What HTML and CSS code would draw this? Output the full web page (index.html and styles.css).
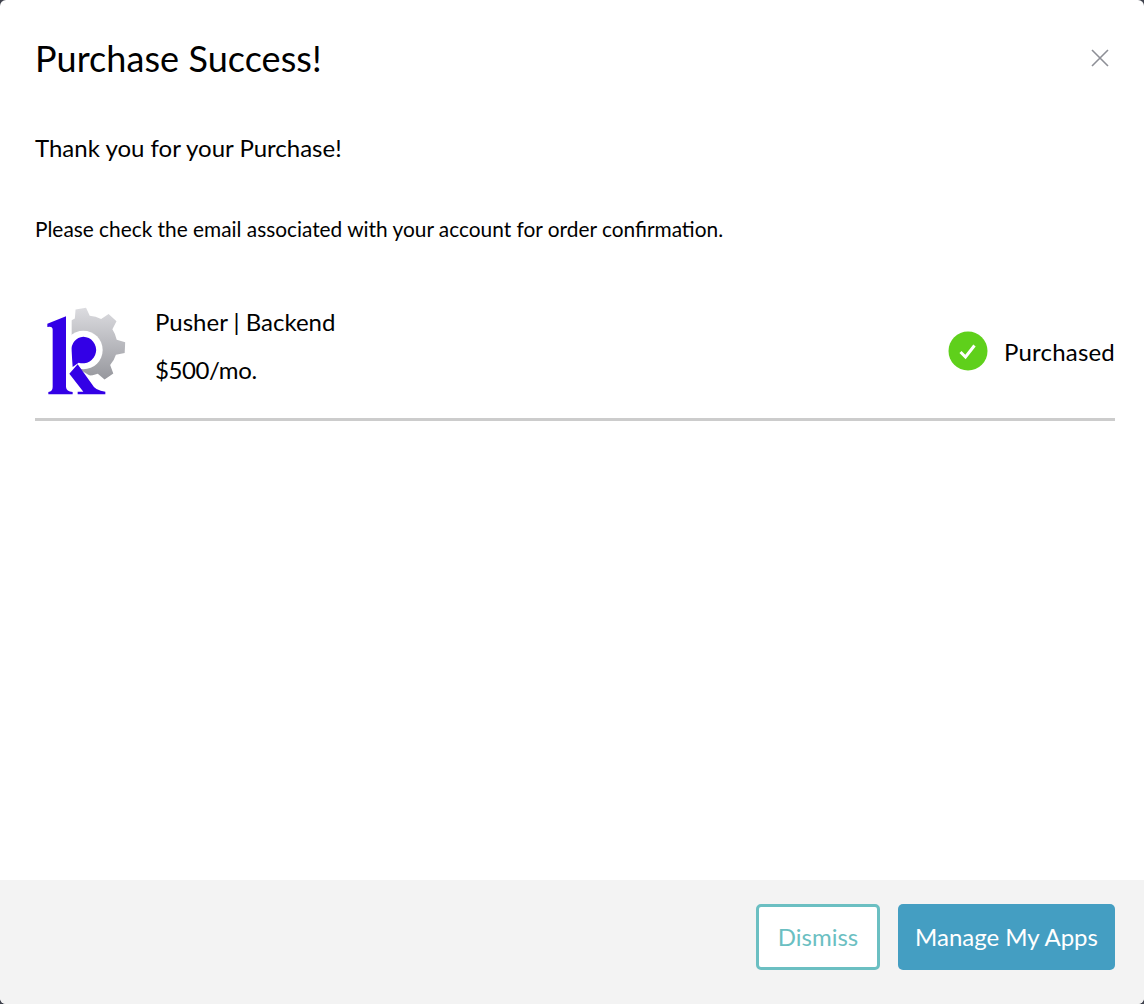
FILE: index.html
```html
<!DOCTYPE html>
<html lang="en">
<head>
  <meta charset="UTF-8" />
  <title>Purchase Success</title>
  <link rel="stylesheet" href="styles.css">
</head>
<body>
  <div class="modal">
    <div class="modal-body">
      <div class="modal-head">
        <h1>Purchase Success!</h1>
        <svg class="close-icon" viewBox="0 0 18 18" aria-label="Close">
          <path d="M1 1 L17 17 M17 1 L1 17" />
        </svg>
      </div>
      <p class="thanks">Thank you for your Purchase!</p>
      <p class="note">Please check the email associated with your account for order confirmation.</p>

      <div class="item">
        <svg class="logo" viewBox="30 36 270 270" aria-label="Logo">
          <defs>
            <linearGradient id="gearFill" gradientUnits="userSpaceOnUse" x1="0" y1="38" x2="0" y2="265">
              <stop offset="0" stop-color="#dcdce0" />
              <stop offset="1" stop-color="#93949a" />
            </linearGradient>
            <clipPath id="gearShape">
              <circle cx="172" cy="152" r="90" />
              <polygon points="148,70 196,70 188,39 156,39" transform="rotate(-10 172 152)" />
              <polygon points="148,70 196,70 188,39 156,39" transform="rotate(42 172 152)" />
              <polygon points="148,70 196,70 188,39 156,39" transform="rotate(93 172 152)" />
              <polygon points="148,70 196,70 188,39 156,39" transform="rotate(145 172 152)" />
            </clipPath>
          </defs>
          <rect x="30" y="36" width="270" height="240" fill="url(#gearFill)" clip-path="url(#gearShape)" />
          <rect x="60" y="36" width="65" height="270" fill="#fff" />
          <polygon points="110,200 190,248 210,306 60,306" fill="#fff" />
          <circle cx="160" cy="165" r="58" fill="#fff" />
          <path fill="#3300e6" d="M52 86 L108 64 L108 276 Q109 290 128 291 L128 298 L55 298 L55 291 Q68 290 68 276 L68 104 Q68 92 52 96 Z" />
          <path fill="#3300e6" d="M160 125 A40 40 0 1 1 146 203 L128 216 Q126 190 125 168 A38 38 0 0 1 160 125 Z" />
          <path fill="#3300e6" d="M143 208 L186 268 Q196 288 226 290 L226 298 L143 298 L143 290 L160 290 L118 236 Z" />
        </svg>
        <div class="item-info">
          <div class="item-name">Pusher | Backend</div>
          <div class="item-price">$500/mo.</div>
        </div>
        <div class="item-status">
          <svg class="check-icon" viewBox="0 0 40 40" aria-hidden="true">
            <circle cx="20" cy="20" r="19.5" />
            <path d="M12.5 21 L17.5 26 L26.5 14.5" />
          </svg>
          <span>Purchased</span>
        </div>
      </div>
    </div>

    <div class="modal-foot">
      <button class="btn btn-outline">Dismiss</button>
      <button class="btn btn-primary">Manage My Apps</button>
    </div>
  </div>
</body>
</html>
```

FILE: styles.css
```css
* {
  box-sizing: border-box;
}
body {
  margin: 0;
  background-color: #3f424d;
  color: #000;
  font-family: Lato, sans-serif;
}
.modal {
  display: flex;
  flex-direction: column;
  height: 1004px;
  background-color: #fff;
  border-radius: 6px;
  overflow: hidden;
}
.modal-body {
  flex: 1;
  padding: 35px 29px 0 35px;
}
.modal-head {
  display: flex;
  justify-content: space-between;
  align-items: center;
  height: 46px;
}
h1 {
  margin: 0;
  font-size: 36px;
  font-weight: 400;
  letter-spacing: 0.06px;
}
.close-icon {
  width: 18px;
  height: 18px;
  margin-right: 6px;
  fill: none;
  stroke: #8d8f96;
  stroke-width: 1.6;
}
.thanks {
  margin: 52px 0 0;
  font-size: 24px;
  line-height: 30px;
}
.note {
  margin: 53px 0 0;
  font-size: 20.85px;
  line-height: 26px;
}
.item {
  display: flex;
  align-items: center;
  margin-top: 65px;
  padding: 0 0 21px 5px;
  border-bottom: 3px solid #ccc;
}
.logo {
  width: 90px;
  height: 90px;
  flex-shrink: 0;
}
.item-info {
  flex: 1;
  margin: 0 0 12px 25px;
  font-size: 24px;
  line-height: 30px;
}
.item-price {
  margin-top: 18px;
  letter-spacing: -0.4px;
}
.item-status {
  display: flex;
  align-items: center;
  gap: 16px;
  margin-bottom: 2px;
  font-size: 24px;
  letter-spacing: 0.2px;
}
.check-icon {
  width: 40px;
  height: 40px;
}
.check-icon circle {
  fill: #5fd01b;
}
.check-icon path {
  fill: none;
  stroke: #fff;
  stroke-width: 3;
}
.modal-foot {
  display: flex;
  justify-content: flex-end;
  gap: 18px;
  height: 124px;
  padding: 24px 29px 0 0;
  background-color: #f3f3f3;
}
.btn {
  height: 66px;
  padding: 0 0 2px;
  border-radius: 5px;
  font-family: Lato, sans-serif;
  font-size: 24px;
  cursor: pointer;
}
.btn-outline {
  width: 124px;
  border: 3px solid #6bbfc2;
  background-color: #fff;
  color: #6bbfc2;
}
.btn-primary {
  width: 217px;
  border: none;
  background-color: #449ec2;
  color: #fff;
}
```
